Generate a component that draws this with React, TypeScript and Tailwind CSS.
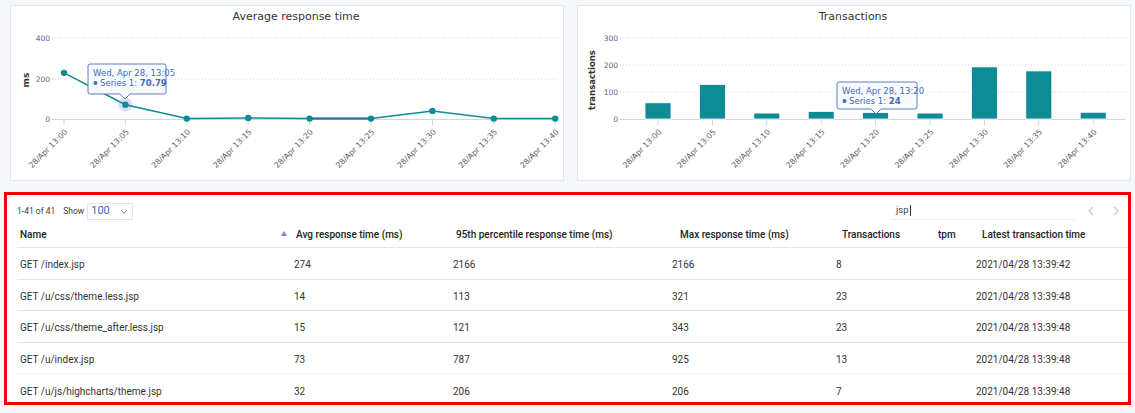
import React from "react";

const labels = ["13:00", "13:05", "13:10", "13:15", "13:20", "13:25", "13:30", "13:35", "13:40"].map((t) => `28/Apr ${t}`);
const lineVals = [228, 70.79, 2, 5, 2, 2, 40, 2, 2];
const barVals = [60, 128, 22, 28, 24, 22, 193, 178, 25];

const TEAL = "#0f8b96";
const chartFont = "'DejaVu Sans', 'Liberation Sans', sans-serif";

function XLabels({ xs, y0 }: { xs: number[]; y0: number }) {
  return (
    <g>
      {xs.map((x, i) => (
        <g key={i}>
          <line x1={x} y1={y0} x2={x} y2={y0 + 6} stroke="#ccd6eb" strokeWidth={1} />
          <text
            x={x + 4}
            y={y0 + 13}
            fontSize={7.8}
            fill="#606060"
            textAnchor="end"
            transform={`rotate(-45 ${x + 4} ${y0 + 13})`}
            style={{ fontFamily: chartFont }}
          >
            {labels[i]}
          </text>
        </g>
      ))}
    </g>
  );
}

function Tooltip({ x, y, w, h, tipX, tipY, line1, series }: { x: number; y: number; w: number; h: number; tipX: number; tipY: number; line1: string; series: string }) {
  const b = y + h;
  return (
    <g style={{ fontFamily: chartFont }}>
      <path
        d={`M${x + 2} ${y} H${x + w - 2} Q${x + w} ${y} ${x + w} ${y + 2} V${b - 2} Q${x + w} ${b} ${x + w - 2} ${b} H${tipX + 5} L${tipX} ${tipY} L${tipX - 5} ${b} H${x + 2} Q${x} ${b} ${x} ${b - 2} V${y + 2} Q${x} ${y} ${x + 2} ${y} Z`}
        fill="rgba(248,250,253,0.96)"
        stroke="#5b80c9"
        strokeWidth={1}
      />
      <text x={x + 5} y={y + 11.5} fontSize={8.5} fill="#3f6cc2">
        {line1}
      </text>
      <circle cx={x + 7.5} cy={y + 19} r={2} fill="#3f6cc2" />
      <text x={x + 12} y={y + 22} fontSize={8.5} fill="#3f6cc2">
        Series 1: <tspan fontWeight={700}>{series}</tspan>
      </text>
    </g>
  );
}

function LineChart() {
  const xs = lineVals.map((_, i) => 53 + i * 61.4);
  const yOf = (v: number) => 113 - (v * 81) / 400;
  const pts = lineVals.map((v, i) => [xs[i], yOf(v)] as const);
  return (
    <svg width={552} height={174} className="block">
      <text x={285} y={14} textAnchor="middle" fontSize={11} fill="#333" style={{ fontFamily: chartFont }}>
        Average response time
      </text>
      {[
        [400, 32],
        [200, 73],
      ].map(([v, y]) => (
        <line key={v} x1={41} x2={547} y1={y} y2={y} stroke="#d8d8d8" strokeWidth={1} strokeDasharray="1 2" />
      ))}
      <line x1={41} x2={547} y1={113.5} y2={113.5} stroke="#ccd6eb" strokeWidth={1} />
      {[
        ["400", 32],
        ["200", 73],
        ["0", 113],
      ].map(([t, y]) => (
        <text key={t as string} x={39} y={(y as number) + 3} fontSize={7.5} fill="#666" textAnchor="end" style={{ fontFamily: chartFont }}>
          {t}
        </text>
      ))}
      <text x={18} y={74} fontSize={9} fontWeight={700} fill="#333" textAnchor="middle" transform="rotate(-90 18 74)" style={{ fontFamily: chartFont }}>
        ms
      </text>
      <XLabels xs={xs} y0={113.5} />
      <circle cx={pts[1][0]} cy={pts[1][1]} r={7} fill="rgba(90,130,200,0.25)" />
      <polyline points={pts.map((p) => p.join(",")).join(" ")} fill="none" stroke={TEAL} strokeWidth={1.5} />
      <line x1={pts[4][0]} y1={pts[4][1]} x2={pts[5][0]} y2={pts[5][1]} stroke="#2f6aa8" strokeWidth={2} />
      {pts.map((p, i) => (
        <circle key={i} cx={p[0]} cy={p[1]} r={3.2} fill={TEAL} />
      ))}
      <Tooltip x={77} y={58} w={78} h={30} tipX={114} tipY={93} line1="Wed, Apr 28, 13:05" series="70.79" />
    </svg>
  );
}

function BarChart() {
  const xs = barVals.map((_, i) => 80 + i * 54.4);
  const yOf = (v: number) => 113 - (v * 81) / 300;
  return (
    <svg width={552} height={174} className="block">
      <text x={275} y={14} textAnchor="middle" fontSize={11} fill="#333" style={{ fontFamily: chartFont }}>
        Transactions
      </text>
      {[32, 59, 86].map((y) => (
        <line key={y} x1={42} x2={547} y1={y} y2={y} stroke="#d8d8d8" strokeWidth={1} strokeDasharray="1 2" />
      ))}
      <line x1={42} x2={547} y1={113.5} y2={113.5} stroke="#ccd6eb" strokeWidth={1} />
      {[
        ["300", 32],
        ["200", 59],
        ["100", 86],
        ["0", 113],
      ].map(([t, y]) => (
        <text key={t as string} x={40} y={(y as number) + 3} fontSize={7.5} fill="#666" textAnchor="end" style={{ fontFamily: chartFont }}>
          {t}
        </text>
      ))}
      <text x={17} y={74} fontSize={8.5} fontWeight={700} fill="#333" textAnchor="middle" transform="rotate(-90 17 74)" style={{ fontFamily: chartFont }}>
        transactions
      </text>
      <XLabels xs={xs} y0={113.5} />
      {barVals.map((v, i) => (
        <rect key={i} x={xs[i] - 13} y={yOf(v)} width={26} height={113 - yOf(v)} fill={TEAL} stroke="#fff" strokeWidth={0.8} />
      ))}
      <Tooltip x={259} y={76} w={80} h={27} tipX={298} tipY={108} line1="Wed, Apr 28, 13:20" series="24" />
    </svg>
  );
}

const rows = [
  ["GET /index.jsp", "274", "2166", "2166", "8", "", "2021/04/28 13:39:42"],
  ["GET /u/css/theme.less.jsp", "14", "113", "321", "23", "", "2021/04/28 13:39:48"],
  ["GET /u/css/theme_after.less.jsp", "15", "121", "343", "23", "", "2021/04/28 13:39:48"],
  ["GET /u/index.jsp", "73", "787", "925", "13", "", "2021/04/28 13:39:48"],
  ["GET /u/js/highcharts/theme.jsp", "32", "206", "206", "7", "", "2021/04/28 13:39:48"],
];

function Chevron({ dir }: { dir: "left" | "right" }) {
  return (
    <svg width="6" height="10" viewBox="0 0 6 10">
      <path d={dir === "left" ? "M5 1 L1 5 L5 9" : "M1 1 L5 5 L1 9"} fill="none" stroke="#c7ccd5" strokeWidth="1.3" />
    </svg>
  );
}

export default function App() {
  return (
    <div className="w-[1135px] h-[413px] overflow-hidden bg-[#f6f8fb] px-[4px] pt-[5px]" style={{ fontFamily: "Roboto, 'Liberation Sans', sans-serif" }}>
      <div className="flex gap-[13px] pl-[6px]">
        <div className="flex-1 h-[176px] bg-white border border-[#e2e6ee]">
          <LineChart />
        </div>
        <div className="flex-1 h-[176px] bg-white border border-[#e2e6ee]">
          <BarChart />
        </div>
      </div>
      <div className="mt-[11px] h-[213px] border-[3px] border-[#f50000] bg-white pl-[10px] text-[10px] text-[#333]">
        <div className="flex items-center h-[27px] pt-[5px]">
          <span className="text-[8.5px] text-[#444]">1-41 of 41</span>
          <span className="ml-[8px] text-[8.5px] text-[#444]">Show</span>
          <div className="ml-[3px] flex items-center justify-between w-[46px] h-[17px] border border-[#e1e5ec] pl-[3px] pr-[4px]">
            <span className="text-[11px] text-[#4a5fc1]">100</span>
            <svg width="8" height="5" viewBox="0 0 8 5">
              <path d="M1 1 L4 4 L7 1" fill="none" stroke="#8190b0" strokeWidth="1" />
            </svg>
          </div>
          <div className="ml-auto w-[185px] h-[18px] border-b border-[#eef0f4] flex items-center pl-[5px] text-[9.5px] text-[#444]">
            jsp<span className="ml-[1px] inline-block w-px h-[11px] bg-[#333]" />
          </div>
          <div className="ml-[12px] flex items-center">
            <Chevron dir="left" />
          </div>
          <div className="ml-[19px] mr-[9px] flex items-center">
            <Chevron dir="right" />
          </div>
        </div>
        <div className="flex items-center h-[26px] border-b border-[#dfe5ef] font-medium text-[#222]">
          <div className="w-[277px] pl-[3px] pr-[7px] flex items-center justify-between">
            <span>Name</span>
            <svg width="6" height="5" viewBox="0 0 6 5" className="-mt-[3px]">
              <path d="M3 0 L6 5 L0 5 Z" fill="#8088dd" />
            </svg>
          </div>
          <div className="w-[159px] pl-[2px]">Avg response time (ms)</div>
          <div className="w-[219px] pl-[3px]">95th percentile response time (ms)</div>
          <div className="w-[164px] pl-[8px]">Max response time (ms)</div>
          <div className="w-[98px] pl-[6px]">Transactions</div>
          <div className="w-[42px] pl-[4px]">tpm</div>
          <div className="flex-1 pl-[6px]">Latest transaction time</div>
        </div>
        {rows.map((r, i) => (
          <div key={i} className={`flex items-center h-[31.5px] pt-[3px] ${i === 3 ? "border-b border-[#f0f2f6]" : i < 3 ? "border-b border-[#dfe5ef]" : ""}`}>
            <div className="w-[277px] pl-[3px]">{r[0]}</div>
            <div className="w-[159px]">{r[1]}</div>
            <div className="w-[219px]">{r[2]}</div>
            <div className="w-[164px]">{r[3]}</div>
            <div className="w-[98px]">{r[4]}</div>
            <div className="w-[42px]">{r[5]}</div>
            <div className="flex-1">{r[6]}</div>
          </div>
        ))}
      </div>
    </div>
  );
}
